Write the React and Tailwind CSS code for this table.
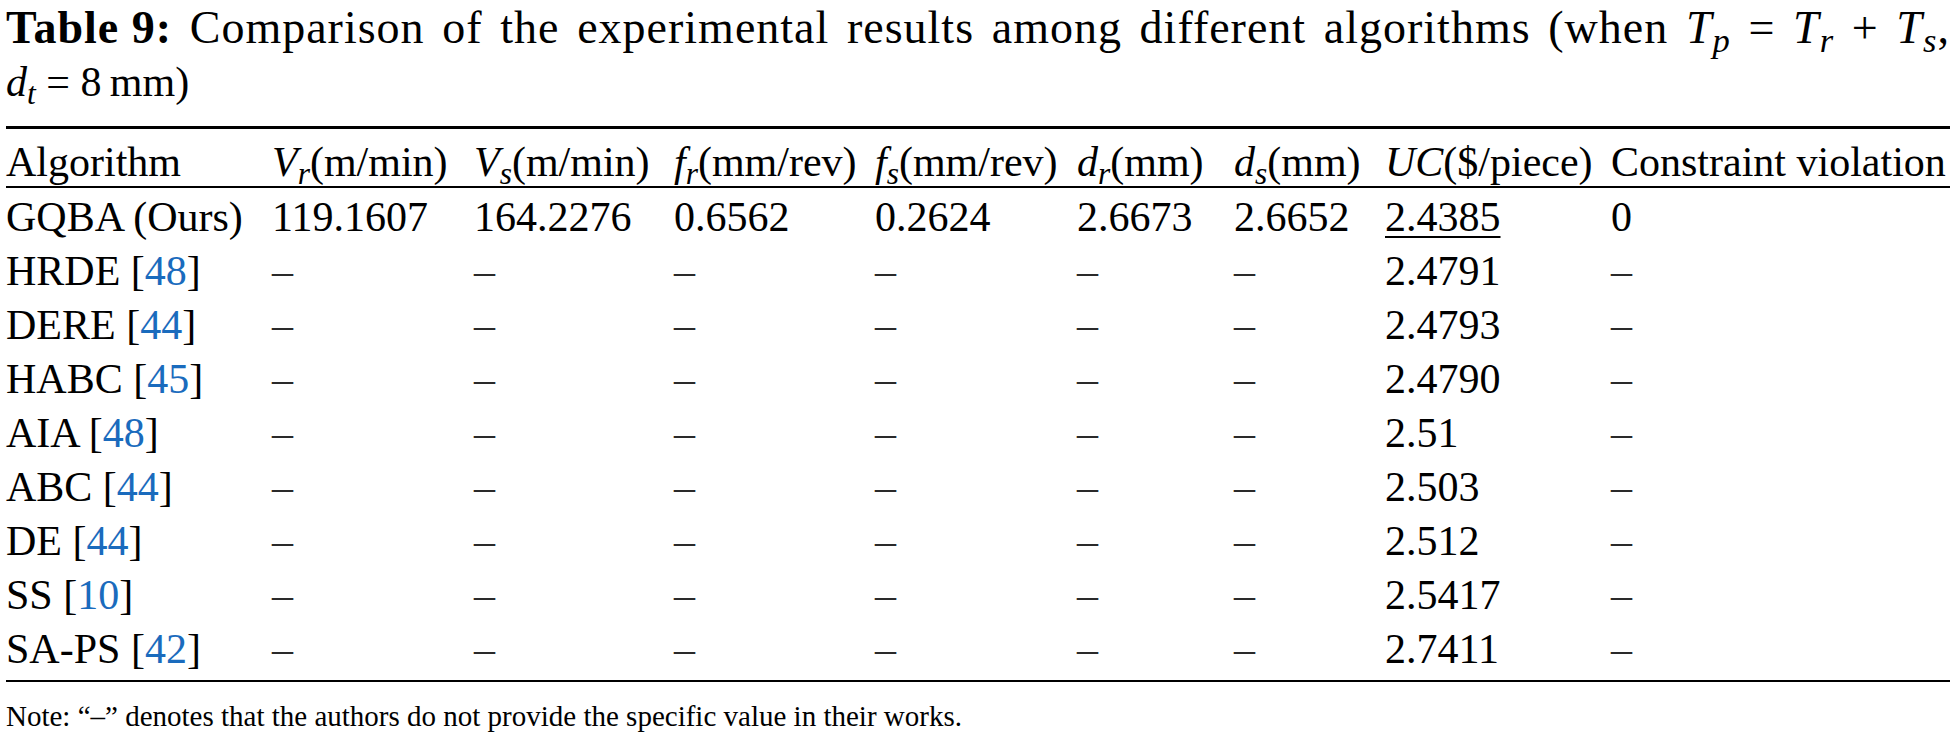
import React from "react";

const cols = "grid grid-cols-[266px_202px_200px_201px_202px_157px_151px_226px_1fr] items-center";

const Ref = ({ n }) => (
  <>
    [<span className="text-[#1a6bbd]">{n}</span>]
  </>
);

const Sym = ({ base, sub }) => (
  <>
    <i>{base}</i>
    <sub className="italic">{sub}</sub>
  </>
);

const others = [
  { name: "HRDE", ref: 48, uc: "2.4791" },
  { name: "DERE", ref: 44, uc: "2.4793" },
  { name: "HABC", ref: 45, uc: "2.4790" },
  { name: "AIA", ref: 48, uc: "2.51" },
  { name: "ABC", ref: 44, uc: "2.503" },
  { name: "DE", ref: 44, uc: "2.512" },
  { name: "SS", ref: 10, uc: "2.5417" },
  { name: "SA-PS", ref: 42, uc: "2.7411" },
];

const Dash = () => <span className="text-[#2a2a2a]">–</span>;

export default function App() {
  return (
    <div className="w-[1954px] h-[737px] bg-white text-black pl-[6px] pr-[4px] font-['Liberation_Serif',serif] overflow-hidden">
      {/* Caption */}
      <div className="leading-[55px]">
        <div className="text-[46px] tracking-[1px] whitespace-nowrap flex justify-between">
          <span><b>Table 9:</b></span>
          <span>Comparison</span>
          <span>of</span>
          <span>the</span>
          <span>experimental</span>
          <span>results</span>
          <span>among</span>
          <span>different</span>
          <span>algorithms</span>
          <span>(when</span>
          <span><Sym base="T" sub="p" /></span>
          <span>=</span>
          <span><Sym base="T" sub="r" /></span>
          <span>+</span>
          <span><Sym base="T" sub="s" />,</span>
        </div>
        <div className="text-[42px]">
          <Sym base="d" sub="t" /> = 8&#8201;mm)
        </div>
      </div>

      {/* Table */}
      <div className="mt-[16px] border-t-[3px] border-black" />
      <div className="text-[42px] leading-[54px]">
        <div className={`${cols} h-[57px] pt-[6px] whitespace-nowrap`}>
          <div>Algorithm</div>
          <div><Sym base="V" sub="r" />(m/min)</div>
          <div><Sym base="V" sub="s" />(m/min)</div>
          <div><Sym base="f" sub="r" />(mm/rev)</div>
          <div><Sym base="f" sub="s" />(mm/rev)</div>
          <div><Sym base="d" sub="r" />(mm)</div>
          <div><Sym base="d" sub="s" />(mm)</div>
          <div><i>UC</i>($/piece)</div>
          <div>Constraint violation</div>
        </div>
        <div className="border-t-2 border-black" />
        <div className="pt-[2px]">
          <div className={`${cols} h-[54px] whitespace-nowrap`}>
            <div>GQBA (Ours)</div>
            <div>119.1607</div>
            <div>164.2276</div>
            <div>0.6562</div>
            <div>0.2624</div>
            <div>2.6673</div>
            <div>2.6652</div>
            <div><span className="underline decoration-2 underline-offset-[5px]">2.4385</span></div>
            <div>0</div>
          </div>
          {others.map((r) => (
            <div key={r.name} className={`${cols} h-[54px] whitespace-nowrap`}>
              <div>
                {r.name} <Ref n={r.ref} />
              </div>
              <div><Dash /></div>
              <div><Dash /></div>
              <div><Dash /></div>
              <div><Dash /></div>
              <div><Dash /></div>
              <div><Dash /></div>
              <div>{r.uc}</div>
              <div><Dash /></div>
            </div>
          ))}
        </div>
        <div className="mt-[4px] border-t-2 border-black" />
      </div>
      <div className="mt-[17px] text-[29px] leading-[34px]">
        Note: “–” denotes that the authors do not provide the specific value in their works.
      </div>
    </div>
  );
}
